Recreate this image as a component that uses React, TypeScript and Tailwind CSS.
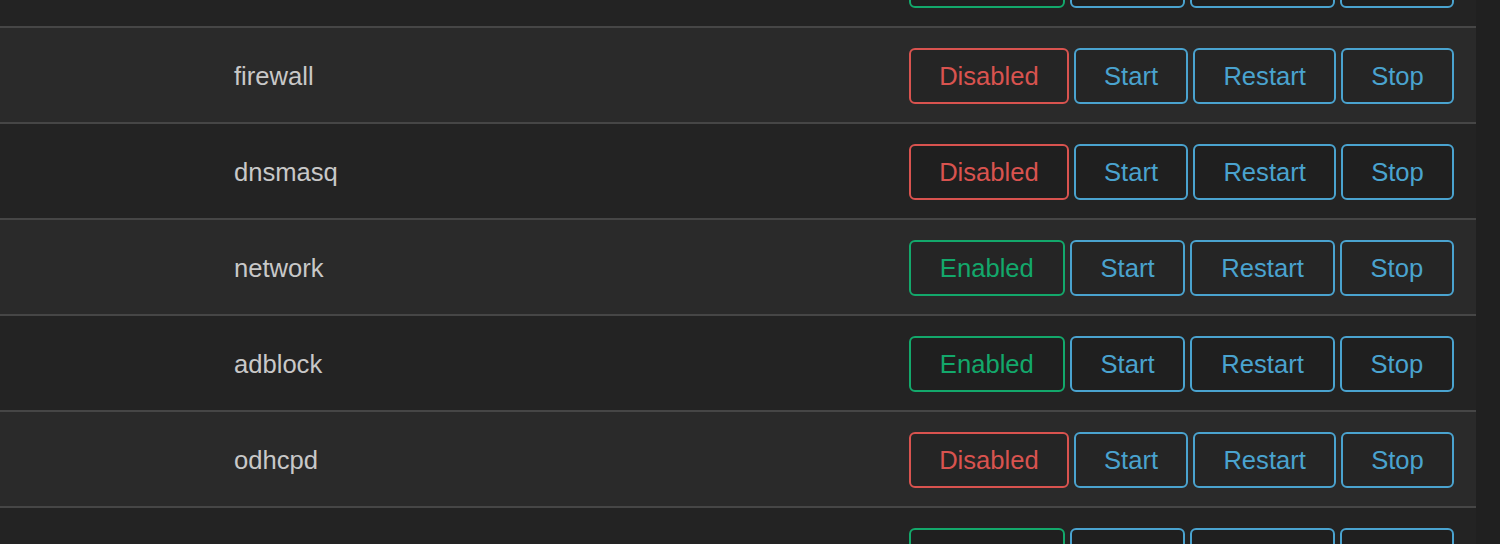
const services: { name: string; enabled: boolean }[] = [
  { name: "dropbear", enabled: true },
  { name: "firewall", enabled: false },
  { name: "dnsmasq", enabled: false },
  { name: "network", enabled: true },
  { name: "adblock", enabled: true },
  { name: "odhcpd", enabled: false },
  { name: "uhttpd", enabled: true },
];

function ActionButton({ label }: { label: string }) {
  return (
    <button className="grow h-[56px] px-[28px] pt-[2px] rounded-[6px] border-2 border-[#4aa3cf] bg-black/10 text-[#4aa3cf] leading-none">
      {label}
    </button>
  );
}

export default function App() {
  return (
    <div
      className="h-[544px] w-[1500px] overflow-hidden bg-[#202020] text-[25.6px]"
      style={{ fontFamily: '"Liberation Sans", Arial, sans-serif' }}
    >
      <div className="w-[1476px] -mt-[68px]">
        {services.map((s, i) => (
          <div
            key={s.name}
            className={`flex items-center justify-between h-[96px] pt-[2px] pl-[234px] pr-[22px] border-b-2 border-[#464646] ${
              i % 2 === 0 ? "bg-[#232323]" : "bg-[#2a2a2a]"
            }`}
          >
            <span className="text-[#c8c8c8]">{s.name}</span>
            <div className="flex items-center gap-[5px] w-[545px]">
              {s.enabled ? (
                <button className="grow h-[56px] px-[28px] pt-[2px] rounded-[6px] border-2 border-[#13a86b] bg-black/10 text-[#13a86b] leading-none">
                  Enabled
                </button>
              ) : (
                <button className="grow h-[56px] px-[28px] pt-[2px] rounded-[6px] border-2 border-[#d9534f] bg-black/10 text-[#d9534f] leading-none">
                  Disabled
                </button>
              )}
              <ActionButton label="Start" />
              <ActionButton label="Restart" />
              <ActionButton label="Stop" />
            </div>
          </div>
        ))}
      </div>
    </div>
  );
}
